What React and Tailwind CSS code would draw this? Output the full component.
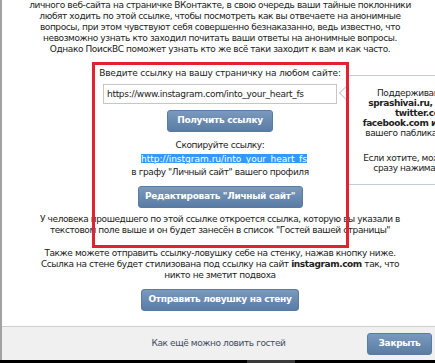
const font = "font-['DejaVu_Sans',sans-serif]";

const btn =
  "flex items-center justify-center h-[22px] rounded-[3px] border border-[#587ba2] bg-linear-to-b from-[#7a99bd] to-[#5a7ca4] text-white font-bold text-[9px] tracking-[-0.3px]";

function Line({ children, className = "" }) {
  return (
    <div className={"h-[11px] leading-[11px] whitespace-nowrap " + className}>
      {children}
    </div>
  );
}

function Tooltip() {
  return (
    <div className="absolute left-[346px] top-[75px] w-[160px] h-[110px] border border-[#c5cbd2] bg-white">
      <div className="absolute left-[-6px] top-[12px] w-[10px] h-[10px] rotate-45 border-l border-b border-[#c5cbd2] bg-white" />
      <div className="relative pt-[12px] text-center text-[9px] tracking-[-0.4px] text-[#222]">
        <div className="h-[10px] leading-[10px] whitespace-nowrap">Поддерживаются все:</div>
        <div className="h-[10px] leading-[10px] whitespace-nowrap font-bold">sprashivai.ru, ask.fm, vk</div>
        <div className="h-[10px] leading-[10px] whitespace-nowrap font-bold">twitter.com и</div>
        <div className="h-[10px] leading-[10px] whitespace-nowrap font-bold">facebook.com и ссылки на</div>
        <div className="h-[10px] leading-[10px] whitespace-nowrap">вашего паблика ВКонтакте</div>
        <div className="mt-[15px] h-[10px] leading-[10px] whitespace-nowrap">Если хотите, можете ничего</div>
        <div className="h-[10px] leading-[10px] whitespace-nowrap">сразу нажимать кнопку</div>
      </div>
    </div>
  );
}

export default function App() {
  return (
    <div className={"relative w-[435px] h-[363px] overflow-hidden bg-white " + font}>
      <div className="flex h-[360px] flex-col border-l-2 border-[#a2a2a2]">
        <div className="flex flex-1 flex-col items-center pl-[3px] text-[9px] tracking-[-0.4px] text-[#222] text-center">
          <div className="-mt-[11px]">
            <Line>Вы можете поставить ссылку-ловушку на свою страничку ask.fm в графу</Line>
            <Line>личного веб-сайта на страничке ВКонтакте, в свою очередь ваши тайные поклонники</Line>
            <Line>любят ходить по этой ссылке, чтобы посмотреть как вы отвечаете на анонимные</Line>
            <Line>вопросы, при этом чувствуют себя совершенно безнаказанно, ведь известно, что</Line>
            <Line>невозможно узнать кто заходил почитать ваши ответы на анонимные вопросы.</Line>
            <Line>Однако ПоискВС поможет узнать кто же всё таки заходит к вам и как часто.</Line>
          </div>

          <Line className="mt-[13px] tracking-[-0.2px]">Введите ссылку на вашу страничку на любом сайте:</Line>
          <input
            readOnly
            value="https://www.instagram.com/into_your_heart_fs"
            className="mt-[5px] h-[20px] w-[234px] border border-[#c3c7cc] px-[3px] text-[9px] tracking-[-0.3px] text-[#222] outline-none"
          />
          <button className={btn + " mt-[6px] w-[106px]"}>Получить ссылку</button>

          <Line className="mt-[8px]">Скопируйте ссылку:</Line>
          <Line className="mt-[3px] ml-[8px] tracking-[0px]">
            <span className="bg-[#3399ff] text-white underline">http://instgram.ru/into_your_heart_fs</span>
          </Line>
          <Line className="mt-[2px]">в графу "Личный сайт" вашего профиля</Line>
          <button className={btn + " mt-[8px] w-[165px]"}>Редактировать "Личный сайт"</button>

          <div className="mt-[6px]">
            <Line>У человека прошедшего по этой ссылке откроется ссылка, которую вы указали в</Line>
            <Line>текстовом поле выше и он будет занесён в список "Гостей вашей страницы"</Line>
          </div>

          <div className="mt-[12px]">
            <Line>Также можете отправить ссылку-ловушку себе на стенку, нажав кнопку ниже.</Line>
            <Line>
              Ссылка на стене будет стилизована под ссылку на сайт <b>instagram.com</b> так, что
            </Line>
            <Line>никто не зметит подвоха</Line>
          </div>

          <button className={btn + " mt-[8px] w-[158px]"}>Отправить ловушку на стену</button>
        </div>

        <div className="grid h-[34px] grid-cols-[1fr_auto_1fr] items-center border-t border-[#cfcfcf] bg-[#f0f0f0] text-[9px] tracking-[-0.4px]">
          <div />
          <span className="text-[#3e4c5c]">Как ещё можно ловить гостей</span>
          <div className="flex justify-end pr-[3px]">
            <button className={btn + " w-[65px]"}>Закрыть</button>
          </div>
        </div>
      </div>
      <div className="flex h-[3px] bg-black">
        <div className="ml-[247px] w-[48px] bg-[#3a3a3a]" />
      </div>

      <Tooltip />
      <div className="absolute left-[92px] top-[62px] w-[257px] h-[186px] border-[3px] border-[#e2222e]" />
    </div>
  );
}
